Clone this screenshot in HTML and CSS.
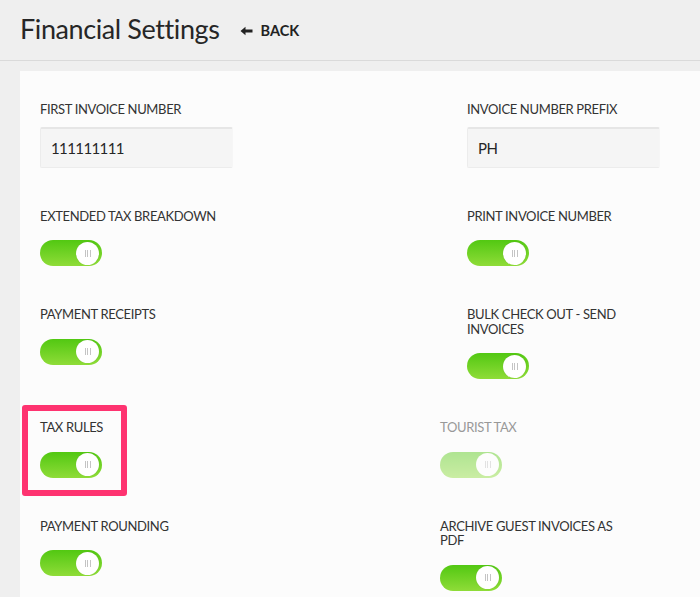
FILE: index.html
```html
<!DOCTYPE html>
<html>
<head>
<meta charset="utf-8">
<link rel="stylesheet" href="styles.css">
</head>
<body>
<header class="topbar">
  <h1 class="title">Financial Settings</h1>
  <a class="back" href="#"><svg class="back-arrow" width="13" height="10" viewBox="0 0 13 10"><path d="M0.5 5 L5.5 0.8 L5.5 3.6 L12.5 3.6 L12.5 6.4 L5.5 6.4 L5.5 9.2 Z" fill="#222"/></svg>BACK</a>
</header>
<main class="panel">
  <div class="grid">
    <div class="cell">
      <div class="label">FIRST INVOICE NUMBER</div>
      <div class="input">111111111</div>
    </div>
    <div class="cell cell-inset">
      <div class="label">INVOICE NUMBER PREFIX</div>
      <div class="input">PH</div>
    </div>

    <div class="cell">
      <div class="label">EXTENDED TAX BREAKDOWN</div>
      <div class="toggle"><span class="knob"><i></i><i></i><i></i></span></div>
    </div>
    <div class="cell cell-inset">
      <div class="label">PRINT INVOICE NUMBER</div>
      <div class="toggle"><span class="knob"><i></i><i></i><i></i></span></div>
    </div>

    <div class="cell">
      <div class="label">PAYMENT RECEIPTS</div>
      <div class="toggle"><span class="knob"><i></i><i></i><i></i></span></div>
    </div>
    <div class="cell cell-inset">
      <div class="label label-narrow">BULK CHECK OUT - SEND INVOICES</div>
      <div class="toggle"><span class="knob"><i></i><i></i><i></i></span></div>
    </div>

    <div class="cell cell-highlight">
      <div class="label">TAX RULES</div>
      <div class="toggle"><span class="knob"><i></i><i></i><i></i></span></div>
      <span class="highlight"></span>
    </div>
    <div class="cell cell-disabled">
      <div class="label">TOURIST TAX</div>
      <div class="toggle"><span class="knob"><i></i><i></i><i></i></span></div>
    </div>

    <div class="cell">
      <div class="label">PAYMENT ROUNDING</div>
      <div class="toggle"><span class="knob"><i></i><i></i><i></i></span></div>
    </div>
    <div class="cell">
      <div class="label label-narrow2">ARCHIVE GUEST INVOICES AS PDF</div>
      <div class="toggle"><span class="knob"><i></i><i></i><i></i></span></div>
    </div>
  </div>
</main>
</body>
</html>
```
FILE: styles.css
```css
* { box-sizing: border-box; }
html, body {
  margin: 0;
  padding: 0;
  height: 100%;
  overflow: hidden;
}
body {
  background: #efefef;
  font-family: Lato, "Open Sans", sans-serif;
  color: #2f2f2f;
  display: flex;
  flex-direction: column;
}
.topbar {
  flex: none;
  height: 61px;
  display: flex;
  align-items: center;
  padding: 0 0 0 20px;
  border-bottom: 1px solid #dadada;
  gap: 20px;
}
.title {
  margin: 0;
  font-weight: 400;
  font-size: 27px;
  letter-spacing: -0.4px;
  color: #262626;
  line-height: 1;
  padding-bottom: 3px;
}
.back {
  display: flex;
  align-items: center;
  gap: 8px;
  text-decoration: none;
  color: #222;
  font-weight: 700;
  font-size: 14.5px;
  letter-spacing: 0;
  padding-top: 1px;
}
.panel {
  flex: 1;
  margin: 10px 0 0 20px;
  background: #fcfcfc;
  padding: 31px 0 0 20px;
}
.grid {
  display: grid;
  grid-template-columns: 400px 260px;
  row-gap: 41px;
}
.cell {
  position: relative;
  display: flex;
  flex-direction: column;
  align-items: flex-start;
}
.cell-inset { padding-left: 27px; }
.label {
  font-size: 13px;
  line-height: 14.5px;
  letter-spacing: -0.35px;
  color: #333;
  text-transform: uppercase;
}
.label-narrow { width: 150px; }
.label-narrow2 { width: 180px; }
.input {
  margin-top: 10px;
  width: 193px;
  height: 41px;
  background: #f5f5f5;
  border: 1px solid #ececec;
  border-top: 2px solid #e6e6e6;
  border-right-color: #f6f6f6;
  border-radius: 2px;
  font-size: 15px;
  padding: 0 0 0 10px;
  display: flex;
  align-items: center;
  color: #262626;
  letter-spacing: -0.6px;
}
.toggle {
  margin-top: 17px;
  width: 62px;
  height: 26px;
  border-radius: 13px;
  background: linear-gradient(#52c812, #8fdc38);
  display: flex;
  align-items: center;
  justify-content: flex-end;
  padding-right: 3px;
}
.knob {
  width: 23px;
  height: 23px;
  border-radius: 50%;
  background: #fff;
  box-shadow: 0 0 1px rgba(0,0,0,0.15);
  display: flex;
  align-items: center;
  justify-content: center;
  gap: 1.5px;
}
.knob i {
  display: block;
  width: 1px;
  height: 7px;
  background: #c4c4c4;
}
.cell-disabled .label { color: #999; }
.cell-disabled .toggle { opacity: 0.45; }
.cell-disabled .knob { box-shadow: none; }
.highlight {
  position: absolute;
  left: -18px;
  top: -15px;
  width: 105px;
  height: 91px;
  border: 6px solid #fe3370;
  border-radius: 3px;
  pointer-events: none;
}
```
